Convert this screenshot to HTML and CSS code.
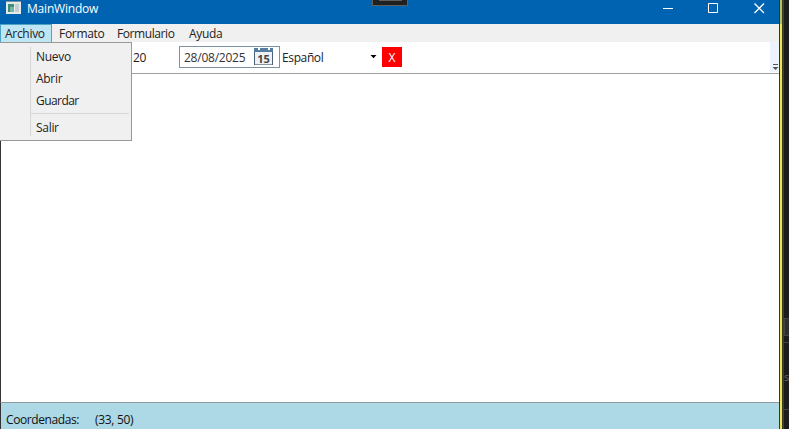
FILE: index.html
```html
<!DOCTYPE html>
<html lang="es">
<head>
<meta charset="utf-8">
<title>MainWindow</title>
<link rel="stylesheet" href="styles.css">
</head>
<body>
<div class="desktop">
  <main class="window">
    <header class="titlebar">
      <svg class="app-icon" width="16" height="14" viewBox="0 0 16 14"><path fill="#e4eae8" d="M0 0h15v13H0z"/><path fill="#7f9299" d="M0 0h15v1H0z"/><path fill="#3d8f7c" d="M2 3h6v8H2z"/><path fill="#78b3a5" d="M4 6h4v5H4z"/><path fill="#c3d0d2" d="M9 3h4v8H9z"/></svg>
      <span class="title">MainWindow</span>
      <div class="controls">
        <svg width="11" height="11" viewBox="0 0 11 11"><path d="M1 5.500h10"/></svg>
        <svg width="11" height="11" viewBox="0 0 11 11"><path d="M.5.5h9v9h-9z"/></svg>
        <svg width="11" height="11" viewBox="0 0 11 11"><path class="cross" d="M.5.5l9.500 9.500M10 .5L.5 10"/></svg>
      </div>
    </header>
    <nav class="menubar">
      <span class="menu open">Archivo</span>
      <span class="menu formato">Formato</span>
      <span class="menu formulario">Formulario</span>
      <span class="menu">Ayuda</span>
    </nav>
    <div class="toolbar">
      <span class="size">20</span>
      <div class="date">
        <span class="day">28/08/2025</span>
        <svg width="20" height="18" viewBox="0 0 20 18"><path fill="#edf1f5" stroke="#8795a5" d="M.5.5h18v16H.5z"/><path fill="#527ca0" d="M0 0h19v4H0z"/><path fill="#fff" d="M4 0h2v2H4zM14 0h2v2h-2z"/><path fill="#496078" d="M0 4h1v13H0zM18 4h1v13h-1z"/><text x="9.500" y="15">15</text></svg>
      </div>
      <span class="language">Español</span>
      <svg class="arrow" width="7" height="4" viewBox="0 0 7 4"><path d="M.5 0h6L3.500 3.300z"/></svg>
      <span class="remove">X</span>
      <div class="overflow"><svg width="7" height="8" viewBox="0 0 7 8"><path d="M1 0h5v1H1zM.5 3h6l-3 3z"/></svg></div>
    </div>
    <section class="canvas"></section>
    <footer class="status"><span class="label">Coordenadas:</span><span class="coords">(33, 50)</span></footer>
    <div class="dropdown">
      <div class="item">Nuevo</div>
      <div class="item">Abrir</div>
      <div class="item guardar">Guardar</div>
      <div class="separator"></div>
      <div class="item">Salir</div>
    </div>
    <div class="notch"></div>
  </main>
  <div class="edge"></div>
  <aside class="behind"><div class="box"></div><div class="line"></div><span>s</span><div class="line lower"></div></aside>
</div>
</body>
</html>
```
FILE: styles.css
```css
* { box-sizing: border-box; }
body { margin: 0; background: #1c1c1c; font: 12px/18px "Open Sans", sans-serif; color: #222; overflow: hidden; }
.desktop { display: flex; width: 789px; height: 429px; }
.window { position: relative; display: flex; flex-direction: column; width: 780px; background: #fff; border-right: 1px solid #343434; }
.titlebar { display: flex; height: 24px; background: #0063b1; color: #fff; padding-left: 6px; }
.app-icon { margin-top: 1px; }
.title { margin-left: 5px; letter-spacing: -.2px; }
.controls { display: flex; gap: 35px; margin: 3px 14px 0 auto; fill: none; stroke: #fff; }
.cross { stroke-width: 1.3; }
.menubar { display: flex; height: 18px; background: #f0f0f0; }
.menu { padding: 0 7px; line-height: 20px; letter-spacing: -.3px; white-space: nowrap; }
.open { width: 52px; padding: 0 4px; background: #bee6f5; border: 1px solid #4ca5c7; border-bottom: 0; line-height: 18px; }
.formato { width: 58px; }
.formulario { width: 72px; letter-spacing: -.42px; }
.toolbar { display: flex; height: 32px; border-bottom: 1px solid #a0a0a0; padding-left: 133px; }
.size { width: 46px; padding-top: 7px; letter-spacing: -.4px; }
.date { display: flex; width: 101px; height: 22px; margin-top: 4px; border: 1px solid #7c92a3; padding: 0 0 0 4px; }
.day { width: 70px; padding-top: 2px; letter-spacing: -.24px; color: #333; }
.date svg { margin-top: 1px; flex: none; }
.date text { font: bold 11px "Open Sans", sans-serif; fill: #444; text-anchor: middle; }
.language { width: 90px; padding: 7px 0 0 2px; letter-spacing: -.38px; }
.arrow { margin-top: 13px; }
.remove { width: 20px; height: 20px; margin: 5px 0 0 5px; background: #f00; color: #fff; line-height: 21px; text-align: center; }
.overflow { display: flex; width: 9px; margin-left: auto; height: 30px; background: #edf3fd; align-items: end; justify-content: end; fill: #555; }
.canvas { flex: 1; border-left: 1px solid #343434; }
.status { display: flex; height: 27px; background: #add8e6; border-top: 1px solid #8e9ca1; border-left: 1px solid #343434; padding: 8px 0 0 5px; letter-spacing: -.3px; color: #111; }
.label { width: 89px; letter-spacing: -.4px; }
.dropdown { position: absolute; left: 0; top: 42px; width: 132px; height: 99px; background: linear-gradient(#d7d7d7, #d7d7d7) 30px 4px / 1px 89px no-repeat #f0f0f0; border: 1px solid #999; border-left: 0; padding: 3px 2px; }
.item { height: 22px; padding-left: 34px; line-height: 22px; letter-spacing: -.3px; }
.guardar { letter-spacing: -.55px; }
.separator { height: 1px; background: #d7d7d7; margin: 1px 0 3px 28px; }
.notch { position: absolute; left: 372px; top: 0; width: 36px; height: 6px; background: linear-gradient(#5e5e5e, #5e5e5e) 6px 0 / 23px 1px no-repeat #202020; border: 1px solid #5e625f; border-top: 0; }
.edge { width: 4px; background: linear-gradient(#b6c052, #b6c052) 0 0 / 2px 24px no-repeat, linear-gradient(90deg, #ece34f 0 2px, #383b25 2px 3px, #07517a 3px); }
.behind { width: 5px; background: #1c1c1c; padding-top: 318px; color: #666; font-size: 11px; overflow: hidden; }
.box { height: 18px; background: #2e2e2e; border: 1px solid #444; border-right: 0; }
.line { height: 1px; background: #444; margin-top: 6px; }
.behind span { display: block; margin-top: 25px; }
.lower { margin-top: 23px; }
```
